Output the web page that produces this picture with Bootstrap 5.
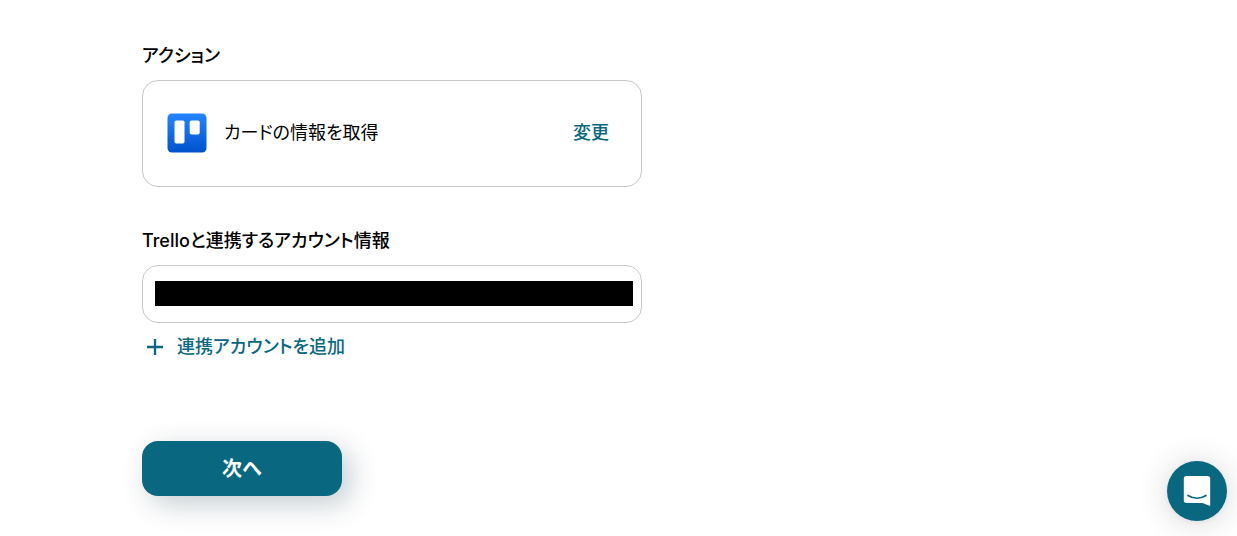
<!DOCTYPE html>
<html lang="ja">
<head>
<meta charset="utf-8">
<meta name="viewport" content="width=device-width, initial-scale=1">
<title>アクション設定</title>
<link href="https://cdn.jsdelivr.net/npm/bootstrap@5.3.0/dist/css/bootstrap.min.css" rel="stylesheet">
<style>
body{font-family:Inter,"Noto Sans CJK JP",sans-serif;font-size:18px;line-height:28px;color:#000;font-feature-settings:"palt"}
.setup-form{max-width:500px;margin-left:142px;padding-top:42px}
.field-title{font-size:18px;font-weight:500;line-height:28px;margin-bottom:10px}
.field-group{margin-bottom:40px}
.action-box{border:1px solid #c8c8c8;border-radius:16px;padding:32px 32px 33px 24px}
.action-name{margin-left:17px}
.link-teal,.link-teal:hover{color:#0a6780;font-weight:500;text-decoration:none;font-size:18px;line-height:28px}
.account-box{border:1px solid #c8c8c8;border-radius:16px;padding:15px 8px 16px 12px}
.masked{display:block;height:25px;background:#000;border:0;border-radius:0}
.add-link{gap:9px;margin-top:10px}
.form-actions{margin-top:80px;padding-bottom:40px}
.next-btn,.next-btn:hover{width:200px;height:55px;border-radius:16px;background:#0a6780;color:#fff;font-size:20px;font-weight:700;box-shadow:8px 8px 28px rgba(10,40,60,.24)}
.chat-btn,.chat-btn:hover{width:60px;height:60px;right:10px;bottom:15px;background:#0a6780;box-shadow:0 1px 6px rgba(0,0,0,.06),0 2px 32px rgba(0,0,0,.16)}
</style>
</head>
<body>
<main class="setup-form">
<section class="field-group">
<h2 class="field-title">アクション</h2>
<div class="action-box d-flex align-items-center">
<svg width="40" height="40" viewBox="0 0 40 40" aria-hidden="true"><defs><linearGradient id="tg" x2="0" y2="1"><stop stop-color="#2684ff"/><stop offset="1" stop-color="#0052cc"/></linearGradient></defs><rect x=".5" y=".5" width="39" height="39" rx="4.5" fill="url(#tg)"/><rect x="7.5" y="7.5" width="10" height="23" rx="1.7" fill="#fff"/><rect x="22.7" y="7.5" width="10" height="14" rx="1.7" fill="#fff"/></svg>
<span class="action-name">カードの情報を取得</span>
<button class="btn btn-link link-teal border-0 p-0 ms-auto" type="button">変更</button>
</div>
</section>
<section>
<label class="field-title d-block" for="account">Trelloと連携するアカウント情報</label>
<div class="account-box"><input id="account" class="masked w-100" type="text" readonly></div>
<a href="#" class="link-teal add-link d-flex align-items-center"><svg width="26" height="26" viewBox="0 0 26 26" fill="none" stroke="currentColor" stroke-width="2.3" aria-hidden="true"><path d="M5 13h16M13 5v16"/></svg>連携アカウントを追加</a>
</section>
<div class="form-actions"><button class="btn next-btn border-0" type="button">次へ</button></div>
</main>
<button class="chat-btn btn border-0 rounded-circle position-fixed p-0 d-flex align-items-center justify-content-center" type="button" aria-label="チャット">
<svg width="60" height="60" viewBox="0 0 60 60" aria-hidden="true"><path d="M19.500 15H40.500a2.700 2.700 0 0 1 2.700 2.700V45L35.500 42H19.500a2.700 2.700 0 0 1-2.700-2.700V17.700a2.700 2.700 0 0 1 2.700-2.700z" fill="#fff"/><path d="M21 34.500q9 5.500 18 0" fill="none" stroke="#0a6780" stroke-width="1.700" stroke-linecap="round"/></svg>
</button>
<script src="https://cdn.jsdelivr.net/npm/bootstrap@5.3.0/dist/js/bootstrap.bundle.min.js"></script>
</body>
</html>
